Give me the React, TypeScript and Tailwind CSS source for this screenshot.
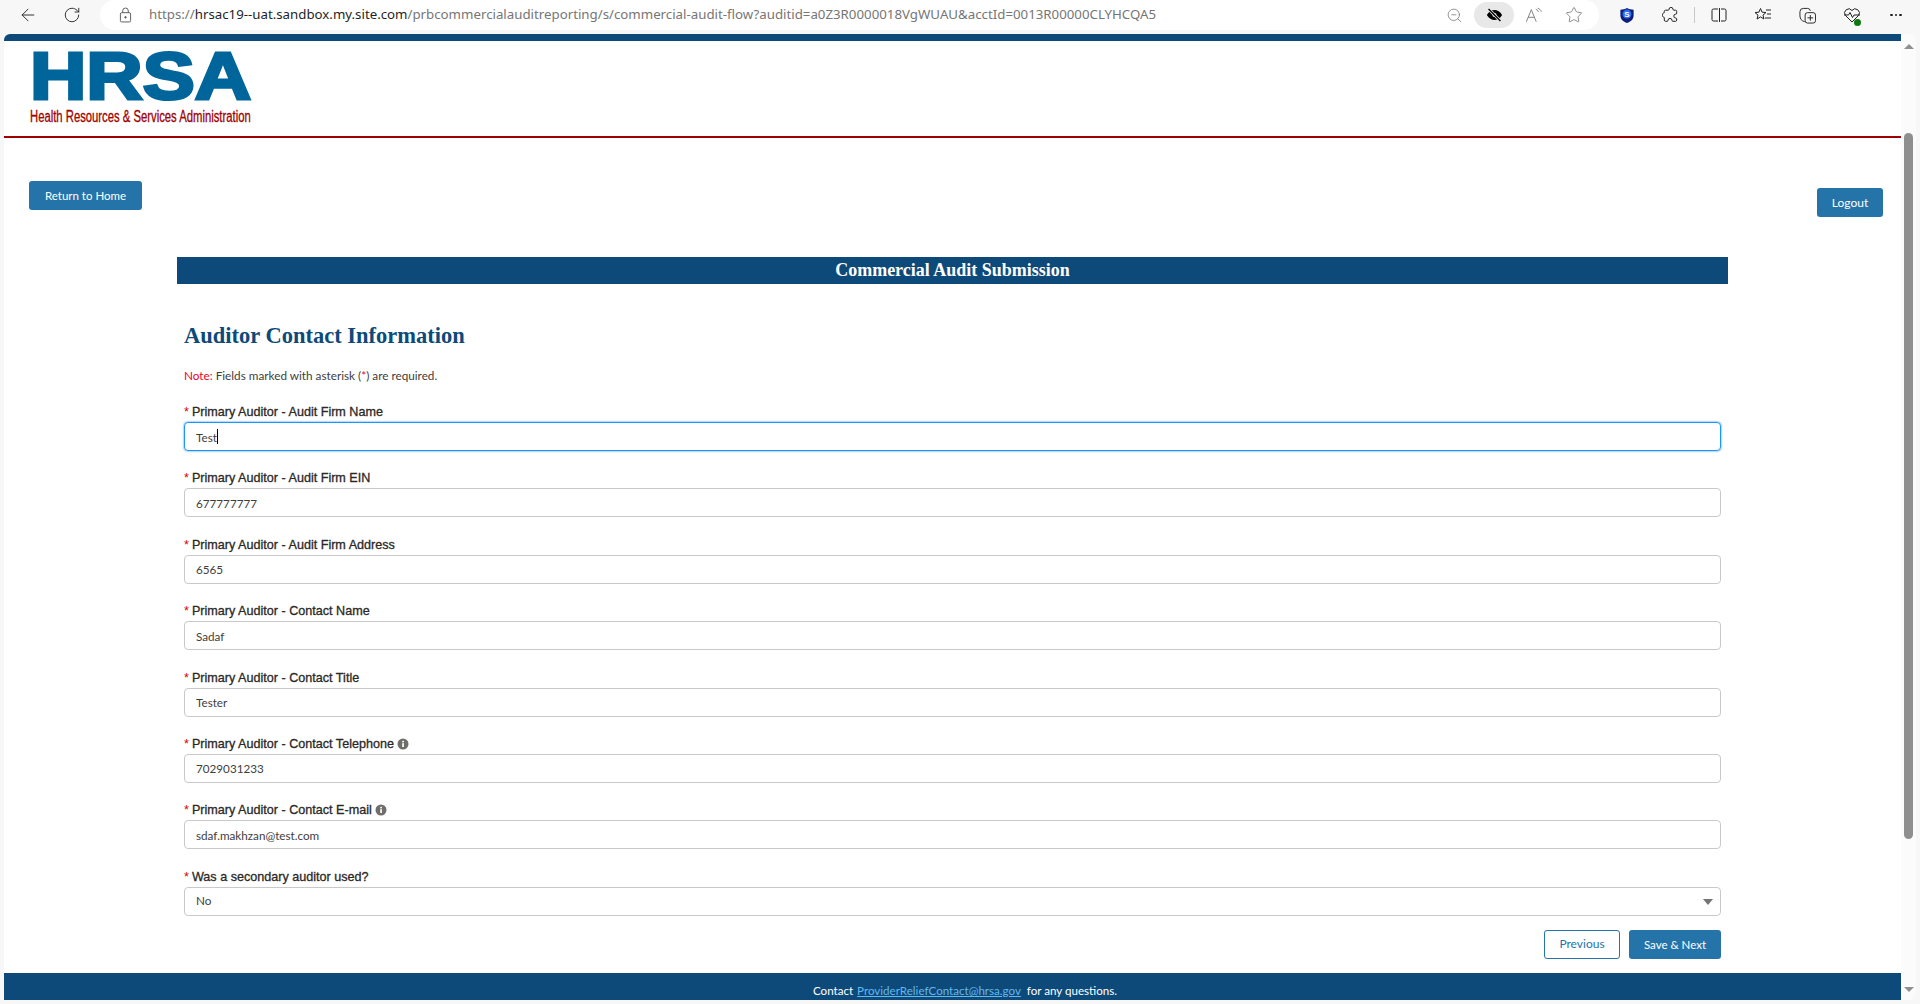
import { ArrowLeft, RotateCw, ZoomOut, Star } from 'lucide-react';

const fields = [
  { label: 'Primary Auditor - Audit Firm Name', value: 'Test', focused: true },
  { label: 'Primary Auditor - Audit Firm EIN', value: '677777777' },
  { label: 'Primary Auditor - Audit Firm Address', value: '6565' },
  { label: 'Primary Auditor - Contact Name', value: 'Sadaf' },
  { label: 'Primary Auditor - Contact Title', value: 'Tester' },
  { label: 'Primary Auditor - Contact Telephone', value: '7029031233', info: true },
  { label: 'Primary Auditor - Contact E-mail', value: 'sdaf.makhzan@test.com', info: true },
];

function InfoIcon() {
  return (
    <svg viewBox="0 0 12 12" className="w-[12px] h-[12px] ml-[3px] -mt-[1px]">
      <circle cx="6" cy="6" r="5.5" fill="#706e6b" />
      <rect x="5.2" y="5.2" width="1.7" height="3.8" fill="#fff" />
      <rect x="5.2" y="2.8" width="1.7" height="1.6" fill="#fff" />
    </svg>
  );
}

function FieldLabel({ text, info }: { text: string; info?: boolean }) {
  return (
    <label className="flex items-center h-[17px] mb-[1px] text-[12.6px] leading-[17px] text-[#2b2826] font-['Liberation_Sans',sans-serif] [-webkit-text-stroke:0.3px_#2b2826]">
      <span className="text-[#e00000] mr-[3px] [-webkit-text-stroke:0]">*</span>
      {text}
      {info && <InfoIcon />}
    </label>
  );
}

function BrowserBar() {
  return (
    <div className="flex items-center h-[34px] shrink-0 bg-[#f7f7f7] text-[#222]">
      <div className="flex items-center w-[100px] h-[30px] pl-[18px] gap-[25px] self-start">
        <ArrowLeft className="w-[20px] h-[20px]" strokeWidth={1.1} />
        <RotateCw className="w-[18px] h-[18px]" strokeWidth={1.2} />
      </div>
      <div className="flex items-center w-[1499px] h-[30px] self-start bg-white rounded-r-[15px] rounded-l-[15px] pl-[19px]">
        <svg viewBox="0 0 14 16" className="w-[13px] h-[16px] text-[#555]" fill="none" stroke="currentColor">
          <rect x="1.5" y="5.5" width="11" height="10" rx="1.5" />
          <path d="M4 5.5V3.5a3 3 0 0 1 6 0v2" />
          <circle cx="7" cy="10.5" r="0.8" fill="currentColor" />
        </svg>
        <div className="ml-[17px] w-[1040px] text-[13.27px] font-['Noto_Sans',sans-serif] text-[#767676] whitespace-nowrap">
          https://<span className="text-[#1f1f1f]">hrsac19--uat.sandbox.my.site.com</span>/prbcommercialauditreporting/s/commercial-audit-flow?auditid=a0Z3R0000018VgWUAU&amp;acctId=0013R00000CLYHCQA5
        </div>
        <div className="flex items-center ml-auto pr-[16px] text-[#777]">
          <ZoomOut className="w-[17px] h-[17px]" strokeWidth={1.1} />
          <div className="flex items-center justify-center w-[40px] h-[26px] ml-[11px] rounded-[13px] bg-[#e8e8e8] text-black">
            <svg viewBox="0 0 20 16" className="w-[17px] h-[14px]">
              <path d="M1 8c2.5-4 5.5-6 9-6s6.500 2 9 6c-2.500 4-5.500 6-9 6s-6.500-2-9-6z" fill="currentColor" />
              <circle cx="10" cy="8" r="2.400" fill="#e8e8e8" />
              <path d="M3 1l14 14" stroke="#e8e8e8" strokeWidth="3.500" />
              <path d="M3 1l14 14" stroke="currentColor" strokeWidth="1.600" />
            </svg>
          </div>
          <svg viewBox="0 0 20 18" className="w-[18px] h-[17px] ml-[11px]" fill="none" stroke="currentColor" strokeWidth="1">
            <path d="M1.500 16L7 2.500 12.500 16M3.500 11h7" />
            <path d="M12 2c1.500.5 2.500 1.500 3 3M14 .8c2 .7 3.500 2 4.200 4" />
          </svg>
          <Star className="w-[18px] h-[18px] ml-[22px]" strokeWidth={1.1} />
        </div>
      </div>
      <div className="flex items-center h-[30px] self-start flex-1 text-[#222]">
        <svg viewBox="0 0 16 18" className="w-[16px] h-[17px] ml-[20px]">
          <path d="M8 1c2 1.300 4.500 1.800 7 1.800V9c0 4-3 6.500-7 8-4-1.500-7-4-7-8V2.800C3.500 2.800 6 2.300 8 1z" fill="#0d1f7a" />
          <circle cx="8" cy="7.500" r="4.800" fill="#2f6bf0" />
          <text x="8" y="10.500" textAnchor="middle" fontSize="8.500" fontWeight="700" fill="#fff" fontFamily="Liberation Sans">S</text>
        </svg>
        <svg viewBox="0 0 16 16" className="w-[16px] h-[16px] ml-[27px]" fill="none" stroke="currentColor">
          <path d="M7 2.500a2 2 0 0 1 4-.2c0 .6.300.9.900.9h1.600c.8 0 1.200.5 1.200 1.200v1.800c0 .6-.3.900-.9.900a2 2 0 0 0 0 4c.6 0 .9.300.9.900v1.100c0 .7-.5 1.200-1.200 1.200h-2.600c-.6 0-.9-.3-.9-.9a2 2 0 0 0-4 0c0 .6-.3.900-.9.900H3.500c-.7 0-1.200-.5-1.200-1.200v-2.300c0-.5-.3-.8-.8-.8a2 2 0 0 1 0-3.800c.5 0 .8-.3.800-.8V4.400c0-.7.500-1.200 1.200-1.200h2.600c.6 0 .9-.3.900-.7z" />
        </svg>
        <div className="w-px h-[16px] ml-[16px] bg-[#c8c8c8]" />
        <svg viewBox="0 0 16 14" className="w-[16px] h-[14px] ml-[16px]" fill="none" stroke="currentColor">
          <path d="M7 1H2.500A1.500 1.500 0 0 0 1 2.500v9A1.500 1.500 0 0 0 2.500 13H7M10 1h3.500A1.500 1.500 0 0 1 15 2.500v9a1.500 1.500 0 0 1-1.500 1.500H10M8.500 0v14" />
        </svg>
        <svg viewBox="0 0 18 16" className="w-[18px] h-[16px] ml-[27px]" fill="none" stroke="currentColor">
          <path d="M6.500 1.500l1.600 3.700 3.900.3-3 2.600.9 3.900-3.400-2.100-3.400 2.100.9-3.900-3-2.600 3.900-.3zM12 3h5M13 7h4M11 11h6" />
        </svg>
        <svg viewBox="0 0 18 18" className="w-[17px] h-[17px] ml-[27px]" fill="none" stroke="currentColor">
          <path d="M6 15.500C3 15 1 12.500 1 9.500V5a3.500 3.500 0 0 1 3.500-3.500H9a3 3 0 0 1 3 2.500" />
          <rect x="6.500" y="6" width="11" height="11" rx="2.500" />
          <path d="M12 8.500v6M9 11.500h6" />
        </svg>
        <div className="relative ml-[27px] w-[18px] h-[18px]">
          <svg viewBox="0 0 18 18" className="w-[18px] h-[18px]" fill="none" stroke="currentColor">
            <path d="M9 16L2.500 9.500A4 4 0 0 1 9 4.500a4 4 0 0 1 6.500 5L9 16zM1 9h4.500l1.500-2.500 2.500 5 1.500-2.500h6" />
          </svg>
          <div className="absolute right-[0px] bottom-[-2px] w-[7px] h-[7px] rounded-full bg-[#107c10]" />
        </div>
        <div className="flex items-center gap-[2px] ml-[29px]">
          <div className="w-[2.500px] h-[2.500px] rounded-full bg-[#222]" />
          <div className="w-[2.500px] h-[2.500px] rounded-full bg-[#222]" />
          <div className="w-[2.500px] h-[2.500px] rounded-full bg-[#222]" />
        </div>
      </div>
    </div>
  );
}

function Scrollbar() {
  return (
    <div className="flex flex-col items-center w-[15px] bg-[#fbfbfb] rounded-tr-[8px] rounded-br-[8px] pt-[10px] pb-[8px]">
      <div className="w-0 h-0 border-x-[5px] border-x-transparent border-b-[5px] border-b-[#8f8f8f]" />
      <div className="w-[9px] h-[706px] mt-[84px] rounded-[5px] bg-[#8f8f8f]" />
      <div className="w-0 h-0 mt-auto border-x-[5px] border-x-transparent border-t-[5px] border-t-[#8f8f8f]" />
    </div>
  );
}

export default function App() {
  return (
    <div className="flex flex-col h-screen overflow-hidden bg-[#f7f7f7] font-['Lato',sans-serif]">
      <BrowserBar />
      <div className="flex flex-1 min-h-0 pl-[4px] pr-[4px] pb-[4px]">
        <main className="flex flex-col flex-1 min-w-0 bg-white overflow-hidden">
          <div className="h-[7px] shrink-0 bg-[#0d4a7a] rounded-tl-[6px]" />

          <header className="h-[88px] shrink-0 pl-[26px] pt-[7px] border-b-2 border-[#a00000] box-content -mb-[2px]">
            <div className="origin-left scale-x-[1.165] w-[200px] text-[#00659a] font-['Liberation_Sans',sans-serif] font-bold text-[67px] leading-[56px] [-webkit-text-stroke:3px_#00659a] whitespace-nowrap">
              HRSA
            </div>
            <div className="mt-[4px] origin-left scale-x-[0.705] text-[#a00000] font-['Liberation_Sans',sans-serif] text-[16px] leading-[18px] whitespace-nowrap [-webkit-text-stroke:0.3px_#a00000]">
              Health Resources &amp; Services Administration
            </div>
          </header>

          <div className="flex items-start justify-between shrink-0 h-[79px] mt-[2px] pl-[25px] pr-[18px] pt-[43px]">
            <button className="w-[113px] h-[29px] rounded-[3px] bg-[#2574a9] text-white text-[11.5px]">Return to Home</button>
            <button className="w-[66px] h-[29px] mt-[7px] rounded-[3px] bg-[#2574a9] text-white text-[12px]">Logout</button>
          </div>

          <section className="flex-1 px-[173px]">
            <div className="flex items-center justify-center h-[27px] mt-[40px] bg-[#0d4a7a] text-white font-['Liberation_Serif',serif] font-bold text-[18px]">
              Commercial Audit Submission
            </div>
            <div className="px-[7px]">
              <h2 className="mt-[38px] text-[22.500px] leading-[28px] font-bold text-[#0d4a7a] font-['Liberation_Serif',serif]">
                Auditor Contact Information
              </h2>
              <p className="mt-[18px] mb-[20px] text-[11.750px] leading-[16px] text-[#3e3e3c]">
                <span className="text-[#f0002a]">Note:</span> Fields marked with asterisk (<span className="text-[#f0002a]">*</span>) are required.
              </p>

              <div className="flex flex-col gap-y-[19.400px]">
                {fields.map((f) => (
                  <div key={f.label}>
                    <FieldLabel text={f.label} info={f.info} />
                    <div className="relative">
                      <input
                        readOnly
                        value={f.value}
                        className={
                          f.focused
                            ? 'w-full h-[29px] px-[11px] rounded-[4px] border border-[#1b96ff] shadow-[0_0_2px_#0176d3] text-[11.700px] text-[#3e3e3c] outline-none'
                            : 'w-full h-[29px] px-[11px] rounded-[4px] border border-[#c9c9c9] text-[11.700px] text-[#3e3e3c] outline-none'
                        }
                      />
                      {f.focused && <div className="absolute left-[33px] top-[7px] w-px h-[15px] bg-black" />}
                    </div>
                  </div>
                ))}

                <div>
                  <FieldLabel text="Was a secondary auditor used?" />
                  <div className="relative">
                    <select
                      defaultValue="No"
                      className="w-full h-[29px] px-[11px] rounded-[4px] border border-[#c9c9c9] bg-white text-[11.700px] text-[#3e3e3c] outline-none appearance-none"
                    >
                      <option>No</option>
                      <option>Yes</option>
                    </select>
                    <div className="absolute right-[8px] top-[12px] w-0 h-0 border-x-[5px] border-x-transparent border-t-[6px] border-t-[#747474]" />
                  </div>
                </div>
              </div>

              <div className="flex justify-end gap-[9px] mt-[14px]">
                <button className="w-[76px] h-[29px] rounded-[3px] border border-[#2574a9] bg-white text-[#2574a9] text-[12px]">Previous</button>
                <button className="w-[92px] h-[29px] rounded-[3px] bg-[#2574a9] text-white text-[11.500px]">Save &amp; Next</button>
              </div>
            </div>
          </section>

          <footer className="h-[27px] shrink-0 pt-[10px] pl-[25px] bg-[#0d4a7a] text-center text-white text-[11.600px] leading-[16px] whitespace-nowrap">
            Contact <a className="ml-[1px] mr-[3px] text-[#63b8ec] underline">ProviderReliefContact@hrsa.gov</a> for any questions.
          </footer>
        </main>
        <Scrollbar />
      </div>
    </div>
  );
}
